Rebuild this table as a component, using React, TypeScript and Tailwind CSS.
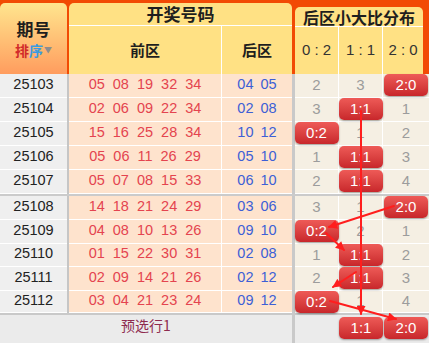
type Cell = number | string;

interface Row {
  issue: string;
  front: string[];
  back: string[];
  dist: Cell[];
  h: number;
}

const rows: Row[] = [
  { issue: '25103', front: ['05', '08', '19', '32', '34'], back: ['04', '05'], dist: [2, 3, '2:0'], h: 24 },
  { issue: '25104', front: ['02', '06', '09', '22', '34'], back: ['02', '08'], dist: [3, '1:1', 1], h: 24 },
  { issue: '25105', front: ['15', '16', '25', '28', '34'], back: ['10', '12'], dist: ['0:2', 1, 2], h: 24 },
  { issue: '25106', front: ['05', '06', '11', '26', '29'], back: ['05', '10'], dist: [1, '1:1', 3], h: 24 },
  { issue: '25107', front: ['05', '07', '08', '15', '33'], back: ['06', '10'], dist: [2, '1:1', 4], h: 24 },
  { issue: '25108', front: ['14', '18', '21', '24', '29'], back: ['03', '06'], dist: [3, 1, '2:0'], h: 24 },
  { issue: '25109', front: ['04', '08', '10', '13', '26'], back: ['09', '10'], dist: ['0:2', 2, 1], h: 24 },
  { issue: '25110', front: ['01', '15', '22', '30', '31'], back: ['02', '08'], dist: [1, '1:1', 2], h: 23 },
  { issue: '25111', front: ['02', '09', '14', '21', '26'], back: ['02', '12'], dist: [2, '1:1', 3], h: 24 },
  { issue: '25112', front: ['03', '04', '21', '23', '24'], back: ['09', '12'], dist: ['0:2', 1, 4], h: 22 },
];

function Badge({ label }: { label: string }) {
  return (
    <div className="absolute left-1/2 top-0 -translate-x-1/2 w-[44px] h-[22px] rounded-[5px] bg-gradient-to-b from-[#ee5a57] to-[#c8262b] shadow-[0_1px_2px_rgba(0,0,0,0.35)] flex items-center justify-center text-white text-[15px] z-10">
      {label}
    </div>
  );
}

function DistCell({ value, width, last }: { value: Cell; width: string; last?: boolean }) {
  return (
    <div className={`relative ${width} h-full flex items-center justify-center border-b border-white ${last ? '' : 'border-r'} text-[15px] text-[#9c9c9c]`}>
      {typeof value === 'string' ? <Badge label={value} /> : value}
    </div>
  );
}

function DataRow({ row, separator }: { row: Row; separator?: boolean }) {
  return (
    <>
      <div className="flex" style={{ height: row.h }}>
        <div className="w-[67px] bg-[#efefef] border-b border-white flex items-center justify-center text-[14.5px] text-[#222] pb-[2px]">
          {row.issue}
        </div>
        <div className="w-[2px] bg-[#c6c6c6]" />
        <div className="w-[153px] bg-[#fee3cd] border-b border-r border-white flex items-center justify-center gap-[8px] text-[14.5px] text-[#e4444f] pb-[2px]">
          {row.front.map((n, i) => (
            <span key={i}>{n}</span>
          ))}
        </div>
        <div className="w-[70px] bg-[#fee3cd] border-b border-white flex items-center justify-center gap-[7px] text-[14.5px] text-[#3d5fd6] pb-[2px]">
          {row.back.map((n, i) => (
            <span key={i}>{n}</span>
          ))}
        </div>
        <div className="w-[3px] bg-[#c9c9c9]" />
        <div className="flex flex-1 bg-[#f5efe3]">
          <DistCell value={row.dist[0]} width="w-[44px]" />
          <DistCell value={row.dist[1]} width="w-[44px]" />
          <DistCell value={row.dist[2]} width="flex-1" last />
        </div>
      </div>
      {separator && <div className="h-[2px] bg-[#cbcbcb]" />}
    </>
  );
}

function Arrows() {
  return (
    <svg className="absolute left-0 top-0 pointer-events-none z-20" width="429" height="343" viewBox="0 0 429 343">
      <defs>
        <marker id="head" viewBox="0 0 10 10" refX="9" refY="5" markerWidth="5" markerHeight="4.5" orient="auto" markerUnits="strokeWidth">
          <path d="M0 0 L10 5 L0 10 z" fill="#ff1e1e" />
        </marker>
      </defs>
      <g stroke="#ff1e1e" strokeWidth="2" fill="none" strokeLinecap="round">
        <line x1="361" y1="111" x2="361" y2="314" markerEnd="url(#head)" />
        <line x1="394" y1="206" x2="329" y2="227" markerEnd="url(#head)" />
        <line x1="326" y1="233" x2="344" y2="250" markerEnd="url(#head)" />
        <line x1="356" y1="272" x2="333" y2="287" markerEnd="url(#head)" />
        <line x1="330" y1="301" x2="396" y2="319" markerEnd="url(#head)" />
      </g>
    </svg>
  );
}

export default function App() {
  return (
    <div className="relative w-[429px] h-[343px] overflow-hidden bg-white font-['Liberation_Sans','Noto_Sans_CJK_SC',sans-serif]">
      <div className="flex h-[74px] pt-[3px] bg-[#f24a04]">
        <div className="w-[67px] rounded-t-[5px] bg-gradient-to-b from-[#ffe58e] to-[#ff9c5e] flex flex-col items-center justify-center gap-[1px]">
          <div className="text-[17px] font-bold text-[#1e1e1e] leading-[22px] font-['Noto_Sans_CJK_SC',sans-serif]">期号</div>
          <div className="flex items-center text-[14px] font-bold leading-[18px] font-['Noto_Sans_CJK_SC',sans-serif]">
            <span className="text-[#d12a2a]">排</span>
            <span className="text-[#3a9be2]">序</span>
            <span className="text-[8px] text-[#8d8d8d] ml-[1px]">▼</span>
          </div>
        </div>
        <div className="w-[2px]" />
        <div className="w-[223px] rounded-t-[5px] bg-[#ffe184] flex flex-col font-['Noto_Sans_CJK_SC',sans-serif] font-bold text-[#1e1e1e]">
          <div className="h-[23px] border-b border-white flex items-center justify-center text-[17px]">开奖号码</div>
          <div className="flex flex-1">
            <div className="w-[153px] border-r border-white flex items-center justify-center text-[15px]">前区</div>
            <div className="flex-1 flex items-center justify-center text-[15px]">后区</div>
          </div>
        </div>
        <div className="w-[3px]" />
        <div className="w-[128px] mt-[4px] rounded-t-[5px] bg-[#ffe184] flex flex-col text-[#1e1e1e]">
          <div className="h-[20px] border-b border-white flex items-center justify-center text-[16px] font-bold font-['Noto_Sans_CJK_SC',sans-serif]">
            后区小大比分布
          </div>
          <div className="flex flex-1 text-[15px] text-[#333]">
            <div className="w-[44px] border-r border-white flex items-center justify-center">0 : 2</div>
            <div className="w-[44px] border-r border-white flex items-center justify-center">1 : 1</div>
            <div className="flex-1 flex items-center justify-center">2 : 0</div>
          </div>
        </div>
        <div className="flex-1" />
      </div>

      {rows.map((row, i) => (
        <DataRow key={row.issue} row={row} separator={i === 4} />
      ))}

      <div className="flex h-[30px] border-t-2 border-[#c9c9c9] bg-[#ebebeb]">
        <div className="w-[292px] flex justify-center pt-[1px] text-[14px] leading-[18px] text-[#8e2b4f] font-['Noto_Sans_CJK_SC',sans-serif]">
          预选行1
        </div>
        <div className="w-[3px] bg-[#c9c9c9]" />
        <div className="flex flex-1 pt-[2px]">
          <div className="w-[44px]" />
          <div className="relative w-[44px] h-[22px]">
            <Badge label="1:1" />
          </div>
          <div className="relative flex-1 h-[22px]">
            <Badge label="2:0" />
          </div>
        </div>
      </div>

      <Arrows />
    </div>
  );
}
